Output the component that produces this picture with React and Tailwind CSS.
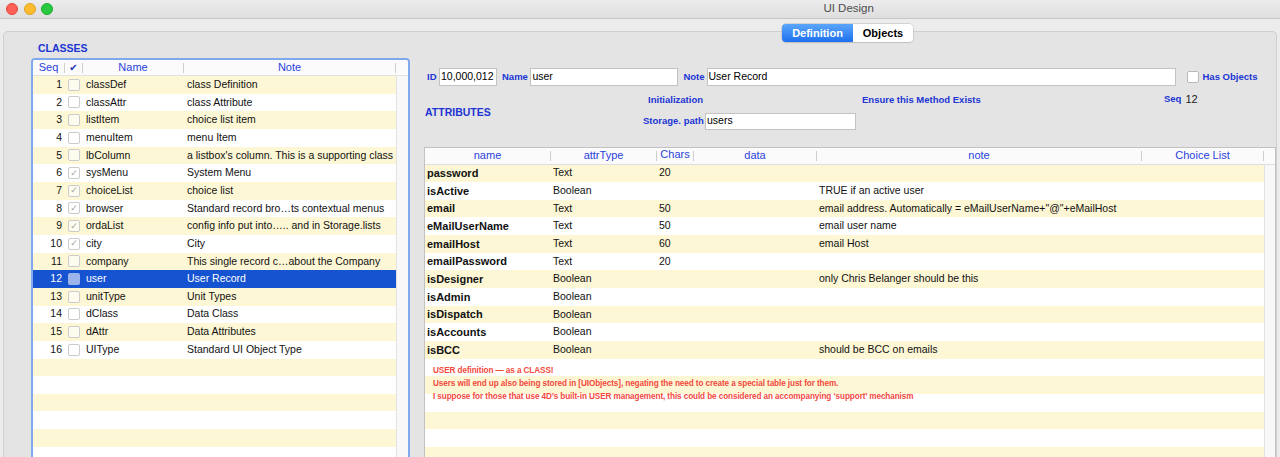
import React from "react";

// CLASSES list
const classes = [
  { seq: 1, name: "classDef", note: "class Definition" },
  { seq: 2, name: "classAttr", note: "class Attribute" },
  { seq: 3, name: "listItem", note: "choice list item" },
  { seq: 4, name: "menuItem", note: "menu Item" },
  { seq: 5, name: "lbColumn", note: "a listbox's column. This is a supporting class" },
  { seq: 6, name: "sysMenu", note: "System Menu", checked: true },
  { seq: 7, name: "choiceList", note: "choice list", checked: true },
  { seq: 8, name: "browser", note: "Standard record bro…ts contextual menus", checked: true },
  { seq: 9, name: "ordaList", note: "config info put into….. and in Storage.lists", checked: true },
  { seq: 10, name: "city", note: "City", checked: true },
  { seq: 11, name: "company", note: "This single record c…about the Company" },
  { seq: 12, name: "user", note: "User Record", selected: true },
  { seq: 13, name: "unitType", note: "Unit Types" },
  { seq: 14, name: "dClass", note: "Data Class" },
  { seq: 15, name: "dAttr", note: "Data Attributes" },
  { seq: 16, name: "UIType", note: "Standard UI Object Type" },
];

// ATTRIBUTES table
const attrs = [
  { name: "password", type: "Text", chars: "20" },
  { name: "isActive", type: "Boolean", note: "TRUE if an active user" },
  { name: "email", type: "Text", chars: "50", note: 'email address. Automatically = eMailUserName+"@"+eMailHost' },
  { name: "eMailUserName", type: "Text", chars: "50", note: "email user name" },
  { name: "emailHost", type: "Text", chars: "60", note: "email Host" },
  { name: "emailPassword", type: "Text", chars: "20" },
  { name: "isDesigner", type: "Boolean", note: "only Chris Belanger should be this" },
  { name: "isAdmin", type: "Boolean" },
  { name: "isDispatch", type: "Boolean" },
  { name: "isAccounts", type: "Boolean" },
  { name: "isBCC", type: "Boolean", note: "should be BCC on emails" },
];

function HeadCell({ w, children }) {
  return (
    <div className={`${w} h-full flex items-center`}>
      <span className="flex-1 text-center truncate">{children}</span>
      <span className="w-px h-[10px] bg-[#cfcfcf]"></span>
    </div>
  );
}

function Box({ checked, selected }) {
  if (selected) {
    return <span className="w-[12px] h-[12px] rounded-[2px] bg-[#9db4ea]"></span>;
  }
  return (
    <span className="w-[12px] h-[12px] rounded-[2px] border border-[#cbcbcb] bg-white/60 flex items-center justify-center text-[9px] leading-none text-[#a3a3a3] font-['DejaVu_Sans',sans-serif]">
      {checked ? "✓" : ""}
    </span>
  );
}

export default function App() {
  const listRows = [];
  for (let i = 0; i < 22; i++) listRows.push(classes[i] || null);

  const attrRows = [];
  for (let i = 0; i < 17; i++) attrRows.push(attrs[i] || null);

  return (
    <div className="w-full h-[457px] overflow-hidden bg-[#ececec] font-['Liberation_Sans',Arial,sans-serif] text-[#111] flex flex-col relative">
      {/* TITLE BAR */}
      <div className="h-[19px] shrink-0 bg-gradient-to-b from-[#ececec] to-[#dedede] border-b border-[#c6c6c6] flex items-center relative">
        <div className="flex items-center gap-[5.7px] pl-[6px]">
          <span className="w-[12px] h-[12px] rounded-full bg-[#fe5f57] border border-[#e2463f]"></span>
          <span className="w-[12px] h-[12px] rounded-full bg-[#febc2e] border border-[#dea123]"></span>
          <span className="w-[12px] h-[12px] rounded-full bg-[#28c840] border border-[#1aab29]"></span>
        </div>
        <span className="ml-[770px] text-[11.5px] text-[#4d4d4d]">UI Design</span>
      </div>

      {/* TABS */}
      <div className="absolute left-[782px] top-[24px] h-[18px] flex rounded-[4px] shadow-[0_0_0_0.5px_#b9b9b9,0_1px_1px_rgba(0,0,0,0.12)] overflow-hidden text-[11px] font-bold z-10">
        <div className="w-[71px] bg-gradient-to-b from-[#5aa5fa] to-[#1d70ef] text-white flex items-center justify-center">Definition</div>
        <div className="w-[60px] bg-white text-black flex items-center justify-center">Objects</div>
      </div>

      {/* PANEL */}
      <div className="mt-[12px] mx-[3px] flex-1 border-t border-l border-r border-[#cfcfcf] rounded-t-[5px] bg-[#e4e4e4] flex min-h-0">
        {/* LEFT: CLASSES */}
        <div className="ml-[27px] w-[379px] flex flex-col min-h-0">
          <div className="pt-[10px] pl-[7px] pb-[3px] text-[10.5px] leading-[13px] font-bold text-[#2035d4]">CLASSES</div>
          <div className="flex-1 border-2 border-b-0 border-[#7fa9ec] rounded-t-[4px] bg-white flex flex-col min-h-0 overflow-hidden">
            <div className="h-[16px] shrink-0 flex bg-[#fbfbfb] border-b border-[#e2e2e2] text-[11px] text-[#2a42dc]">
              <HeadCell w="w-[32px]">Seq</HeadCell>
              <HeadCell w="w-[18px]">
                <span className="font-['DejaVu_Sans',sans-serif] text-[10px] text-[#2031b8]">✔</span>
              </HeadCell>
              <HeadCell w="w-[101px]">Name</HeadCell>
              <HeadCell w="w-[212px]">Note</HeadCell>
            </div>
            <div className="flex flex-1 min-h-0">
              <div className="w-[363px] flex flex-col text-[10.5px]">
                {listRows.map((r, i) => (
                  <div
                    key={i}
                    className={`h-[17.67px] shrink-0 flex items-center ${
                      r && r.selected ? "bg-[#1553d1] text-white" : i % 2 === 0 ? "bg-[#fdf7d5]" : "bg-white"
                    }`}
                  >
                    {r && (
                      <>
                        <span className="w-[32px] text-right pr-[3px]">{r.seq}</span>
                        <span className="w-[18px] pl-[3px] flex">
                          <Box checked={r.checked} selected={r.selected} />
                        </span>
                        <span className="w-[101px] pl-[3px] truncate">{r.name}</span>
                        <span className="flex-1 pl-[3px] truncate">{r.note}</span>
                      </>
                    )}
                  </div>
                ))}
              </div>
              <div className="flex-1 bg-[#f8f8f8] border-l border-[#e3e3e3]"></div>
            </div>
          </div>
        </div>

        {/* RIGHT: DEFINITION */}
        <div className="flex-1 flex flex-col min-h-0">
          {/* fields row */}
          <div className="mt-[36px] h-[18px] shrink-0 flex items-center pl-[17px] text-[9.5px] font-bold text-[#2035d4] whitespace-nowrap">
            <span>ID</span>
            <div className="ml-[2.5px] w-[58px] h-[18px] bg-white border border-[#c3c3c3] flex items-center pl-[1px] text-[10.5px] font-normal text-black">10,000,012</div>
            <span className="ml-[5px]">Name</span>
            <div className="ml-[2.5px] w-[148px] h-[18px] bg-white border border-[#c3c3c3] flex items-center pl-[1px] text-[10.5px] font-normal text-black">user</div>
            <span className="ml-[5px]">Note</span>
            <div className="ml-[2px] w-[469px] h-[18px] bg-white border border-[#c3c3c3] flex items-center pl-[1px] text-[10.5px] font-normal text-black">User Record</div>
            <span className="ml-[11px] w-[12px] h-[12px] rounded-[2px] border border-[#b9b9b9] bg-white"></span>
            <span className="ml-[4px]">Has Objects</span>
          </div>

          {/* second block */}
          <div className="flex h-[44px] shrink-0 whitespace-nowrap">
            <div className="w-[233px] pl-[15px] pt-[20px] text-[10.5px] leading-[13px] font-bold text-[#2035d4]">ATTRIBUTES</div>
            <div className="w-[219px] flex flex-col">
              <div className="mt-[6.5px] w-[60px] text-right text-[9.5px] leading-[13px] font-bold text-[#2035d4]">Initialization</div>
              <div className="mt-[7px] flex items-center">
                <span className="w-[60px] text-right text-[9.5px] font-bold text-[#2035d4]">Storage. path</span>
                <div className="ml-[2px] w-[151px] h-[17.5px] bg-white border border-[#c3c3c3] flex items-center pl-[1px] text-[10.5px] text-black">users</div>
              </div>
            </div>
            <div className="w-[302px] mt-[6.5px] text-[9.5px] leading-[13px] font-bold text-[#2035d4]">Ensure this Method Exists</div>
            <div className="mt-[6.5px] h-[13px] flex items-center">
              <span className="text-[9.5px] font-bold text-[#2035d4]">Seq</span>
              <span className="ml-[4px] text-[11px] text-[#222]">12</span>
            </div>
          </div>

          {/* attributes table */}
          <div className="mt-[16.5px] ml-[14px] flex-1 border-l border-t border-r border-[#c2c2c2] bg-white flex flex-col min-h-0 overflow-hidden">
            <div className="h-[17px] shrink-0 flex bg-[#fbfbfb] border-b border-[#dedede] text-[11px] text-[#2a42dc]">
              <HeadCell w="w-[126px]">name</HeadCell>
              <HeadCell w="w-[106px]">attrType</HeadCell>
              <HeadCell w="w-[37px]">
                <span className="relative -top-[1px]">Chars</span>
              </HeadCell>
              <HeadCell w="w-[123px]">data</HeadCell>
              <HeadCell w="w-[325px]">note</HeadCell>
              <HeadCell w="w-[122px]">Choice List</HeadCell>
            </div>
            <div className="flex flex-1 min-h-0">
              <div className="w-[839px] flex flex-col relative text-[10.5px]">
                {attrRows.map((r, i) => (
                  <div key={i} className={`h-[17.67px] shrink-0 flex items-center ${i % 2 === 0 ? "bg-[#fdf7d5]" : "bg-white"}`}>
                    {r && (
                      <>
                        <span className="w-[126px] pl-[2px] text-[11px] font-bold truncate">{r.name}</span>
                        <span className="w-[106px] pl-[2px]">{r.type}</span>
                        <span className="w-[37px] pl-[2px]">{r.chars || ""}</span>
                        <span className="w-[123px]"></span>
                        <span className="w-[325px] pl-[2px] truncate">{r.note || ""}</span>
                      </>
                    )}
                  </div>
                ))}

                {/* comment over the rows */}
                <div className="absolute left-[8px] top-[199px] text-[8.2px] leading-[13.3px] font-bold tracking-[-0.1px] text-[#f3493d] whitespace-nowrap">
                  <div>USER definition — as a CLASS!</div>
                  <div>Users will end up also being stored in [UIObjects], negating the need to create a special table just for them.</div>
                  <div>I suppose for those that use 4D’s built-in USER management, this could be considered an accompanying ‘support’ mechanism</div>
                </div>
              </div>
              <div className="flex-1 bg-[#f8f8f8] border-l border-[#e3e3e3]"></div>
            </div>
          </div>
        </div>
      </div>
    </div>
  );
}
